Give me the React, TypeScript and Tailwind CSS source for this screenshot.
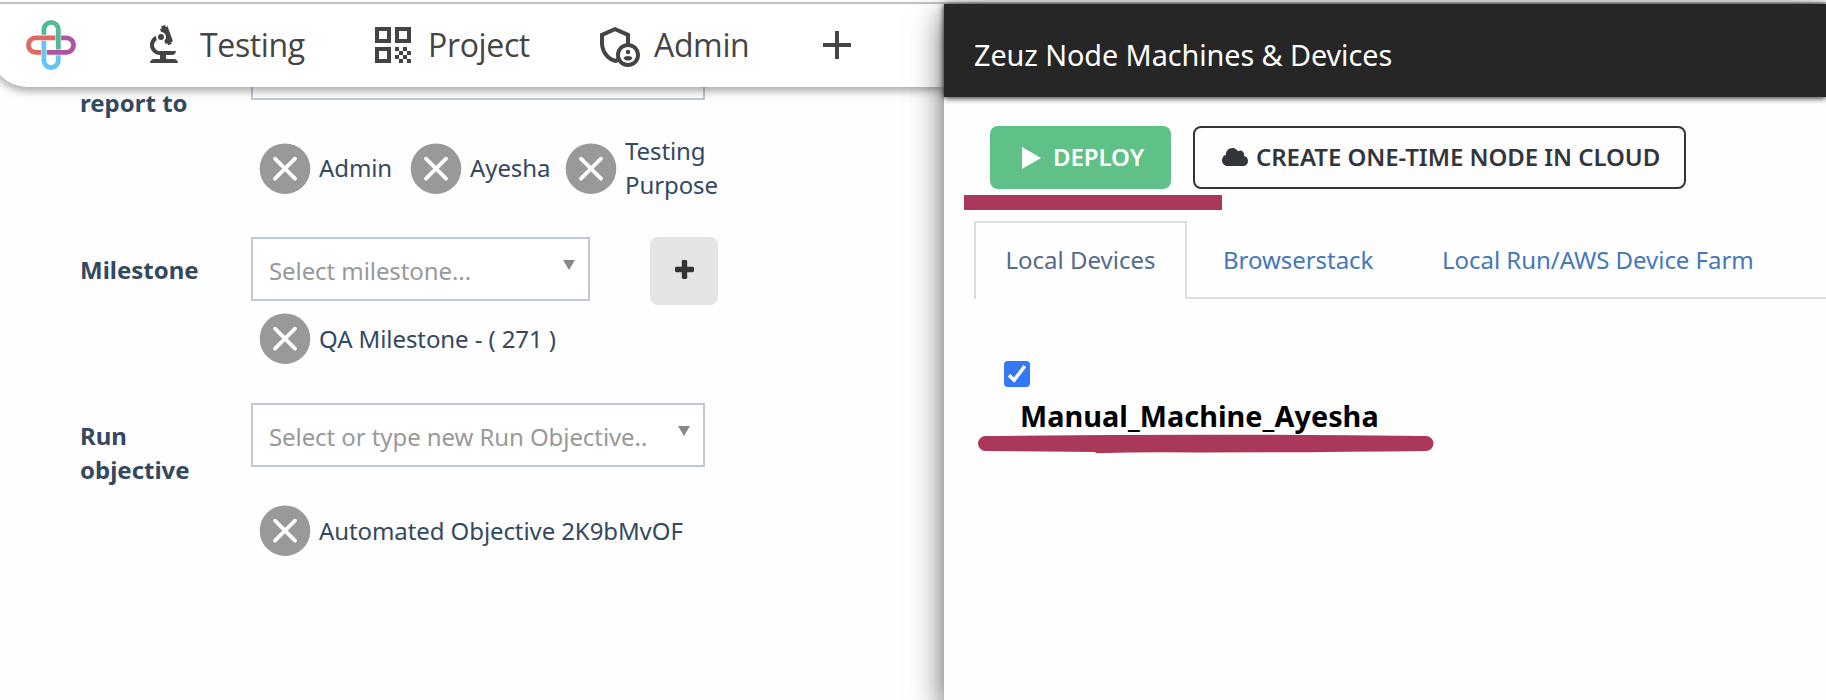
import React from "react";
import { MdBiotech, MdQrCode, MdOutlineAdminPanelSettings, MdAdd } from "react-icons/md";
import { FaCloud } from "react-icons/fa";

function Logo() {
  return (
    <svg width="50" height="50" viewBox="0 0 50 50" fill="none" strokeWidth="4.8" className="mt-[1px] shrink-0">
      <path d="M17.9 14.8 V9.6 A7.2 7.2 0 0 1 32.3 9.6 V29.4" stroke="#57b899" />
      <path d="M35.2 17.9 H40.4 A7.2 7.2 0 0 1 40.4 32.3 H20.8" stroke="#b1549d" />
      <path d="M17.9 20.8 V40.4 A7.2 7.2 0 0 0 32.3 40.4 V35.2" stroke="#64c4f3" />
      <path d="M29.4 17.9 H9.6 A7.2 7.2 0 0 0 9.6 32.3 H15" stroke="#e06862" />
    </svg>
  );
}

function NavItem({ icon, label, className }: { icon: React.ReactNode; label: string; className: string }) {
  return (
    <div className={`flex shrink-0 items-center ${className}`}>
      {icon}
      <span className="font-['Open_Sans',sans-serif] text-[32px] leading-[48px] tracking-[-0.35px] whitespace-nowrap">{label}</span>
    </div>
  );
}

function Chip({ label, className = "" }: { label: React.ReactNode; className?: string }) {
  return (
    <div className={`flex shrink-0 items-center gap-[8px] ${className}`}>
      <svg width="52" height="51" viewBox="0 0 52 51" className="shrink-0">
        <circle cx="26" cy="25.7" r="25.3" fill="#999" />
        <path d="M16 15.7 L36 35.7 M36 15.7 L16 35.7" stroke="#fff" strokeWidth="3.8" strokeLinecap="round" />
      </svg>
      <span className="text-[24px] leading-[34px] tracking-[-0.09px]">{label}</span>
    </div>
  );
}

function Select({ placeholder, className }: { placeholder: string; className: string }) {
  return (
    <div className={`flex h-[64px] items-start justify-between border-2 border-[#c0c8d8] bg-white pr-[13px] pl-[16px] ${className}`}>
      <span className="mt-[15px] text-[24px] leading-[34px] tracking-[-0.08px] whitespace-nowrap text-[#999]">{placeholder}</span>
      <svg width="12" height="10" viewBox="0 0 12 10" className="mt-[21px] shrink-0">
        <path d="M0 0 H12 L6 10 Z" fill="#888" />
      </svg>
    </div>
  );
}

export default function App() {
  return (
    <div className="relative flex h-[700px] w-[1826px] flex-col overflow-hidden bg-[#fefefe] font-['Noto_Sans','Open_Sans',sans-serif] text-[#34495e]">
      <div className="h-[4px] shrink-0 border-b-2 border-[#ccc] bg-white" />
      <div className="flex min-h-0 flex-1">
        <section className="flex w-[944px] shrink-0 flex-col">
          <header className="z-10 -ml-[9px] flex h-[83px] w-[953px] shrink-0 items-center rounded-bl-[36px] bg-white pb-[2px] pl-[35px] text-[#444] shadow-[0_4px_8px_rgba(0,0,0,0.35)]">
            <Logo />
            <NavItem className="ml-[64px] w-[229px] gap-[12px]" icon={<MdBiotech size={48} />} label="Testing" />
            <NavItem className="w-[225px] gap-[11px]" icon={<MdQrCode size={48} />} label="Project" />
            <NavItem className="w-[219px] gap-[12px]" icon={<MdOutlineAdminPanelSettings size={48} />} label="Admin" />
            <MdAdd size={48} className="shrink-0" />
          </header>
          <div className="flex flex-col pl-[80px]">
            <div className="flex h-[150px]">
              <div className="-mt-[1px] w-[171px] text-[24px] leading-[34px] font-bold">report to</div>
              <div className="flex flex-col">
                <div className="h-[13px] w-[454px] border-2 border-t-0 border-[#c0c8d8] bg-white" />
                <div className="mt-[34px] flex items-center pl-[8px]">
                  <Chip className="w-[151px]" label="Admin" />
                  <Chip className="w-[155px]" label="Ayesha" />
                  <Chip label={<>Testing<br />Purpose</>} />
                </div>
              </div>
            </div>
            <div className="flex h-[166px]">
              <div className="mt-[16px] w-[171px] text-[24px] leading-[34px] font-bold">Milestone</div>
              <div className="flex flex-col">
                <div className="flex h-[76px] items-start">
                  <Select className="w-[339px]" placeholder="Select milestone..." />
                  <button className="ml-[60px] flex size-[68px] items-center justify-center rounded-lg bg-[#e4e4e4] text-[#333]">
                    <svg width="19" height="19" viewBox="0 0 19 19" fill="currentColor" className="-mt-[4px]">
                      <rect x="6.8" y="0" width="5.4" height="19" rx="1.4" />
                      <rect x="0" y="6.8" width="19" height="5.4" rx="1.4" />
                    </svg>
                  </button>
                </div>
                <Chip className="pl-[8px]" label="QA Milestone - ( 271 )" />
              </div>
            </div>
            <div className="flex">
              <div className="mt-[16px] w-[171px] text-[24px] leading-[34px] font-bold">Run<br />objective</div>
              <div className="flex flex-col">
                <Select className="w-[454px]" placeholder="Select or type new Run Objective.." />
                <Chip className="mt-[38px] pl-[8px]" label="Automated Objective 2K9bMvOF" />
              </div>
            </div>
          </div>
        </section>

        <section className="z-20 flex flex-1 flex-col bg-[#fefefe] shadow-[0_10px_30px_rgba(0,0,0,0.65)]">
          <header className="flex h-[93px] shrink-0 items-center bg-[#262626] pl-[30px] text-[28.8px] tracking-[-0.07px] text-white shadow-[0_1px_6px_rgba(0,0,0,0.9)]">
            <span className="mt-[9px] whitespace-nowrap">Zeuz Node Machines &amp; Devices</span>
          </header>
          <div className="mt-[29px] flex pl-[46px] text-[24px] font-semibold tracking-[-0.06px]">
            <button className="flex h-[63px] w-[181px] items-center rounded-lg bg-[#5fc088] pl-[32px] text-white">
              <svg width="19" height="22" viewBox="0 0 19 22" className="mr-[12px] shrink-0">
                <path d="M0 0 L19 11 L0 22 Z" fill="currentColor" />
              </svg>
              <span className="-mt-[2px]">DEPLOY</span>
            </button>
            <button className="ml-[22px] flex h-[63px] w-[493px] items-center rounded-lg border-2 border-[#32363a] pl-[27px] whitespace-nowrap text-[#32363a]">
              <FaCloud size={26} className="-mt-[2px] mr-[8px] shrink-0" />
              <span className="-mt-[2px]">CREATE ONE-TIME NODE IN CLOUD</span>
            </button>
          </div>
          <div className="mt-[6px] ml-[20px] h-[15px] w-[258px] bg-[#a9385b]" />
          <nav className="mt-[11px] flex h-[78px] shrink-0 text-[24px] text-[#4379b8]">
            <div className="w-[30px] shrink-0" />
            <div className="flex w-[213px] shrink-0 items-center justify-center border-2 border-b-0 border-[#ddd] pb-[2px] whitespace-nowrap text-[#546b8a]">Local Devices</div>
            <div className="flex flex-1 items-center border-b-2 border-[#ddd] pt-[2px] pl-[36px] tracking-[-0.04px] whitespace-nowrap">
              <span className="w-[219px]">Browserstack</span>
              <span>Local Run/AWS Device Farm</span>
            </div>
          </nav>
          <div className="mt-[62px] flex flex-col">
            <div className="ml-[60px] flex size-[26px] items-center justify-center rounded-[4px] bg-[#3478f6]">
              <svg width="26" height="26" viewBox="0 0 26 26">
                <path d="M5 14.2 L10.2 19 L20.8 5.2" fill="none" stroke="#fff" strokeWidth="3.6" />
              </svg>
            </div>
            <div className="mt-[9px] pl-[76px] text-[28.8px] leading-[40px] font-bold tracking-[0.04px] text-black">Manual_Machine_Ayesha</div>
            <svg width="457" height="20" viewBox="0 0 457 20" className="mt-[-2px] ml-[33px]">
              <path d="M8.5 2 Q230 -0.5 449 2 A7.5 7.5 0 0 1 449 17 Q340 18.5 220 18.5 Q170 17.5 118.5 19.3 V18 L8.5 17 A7.5 7.5 0 0 1 8.5 2 Z" fill="#a9385b" />
            </svg>
          </div>
        </section>
      </div>
    </div>
  );
}
